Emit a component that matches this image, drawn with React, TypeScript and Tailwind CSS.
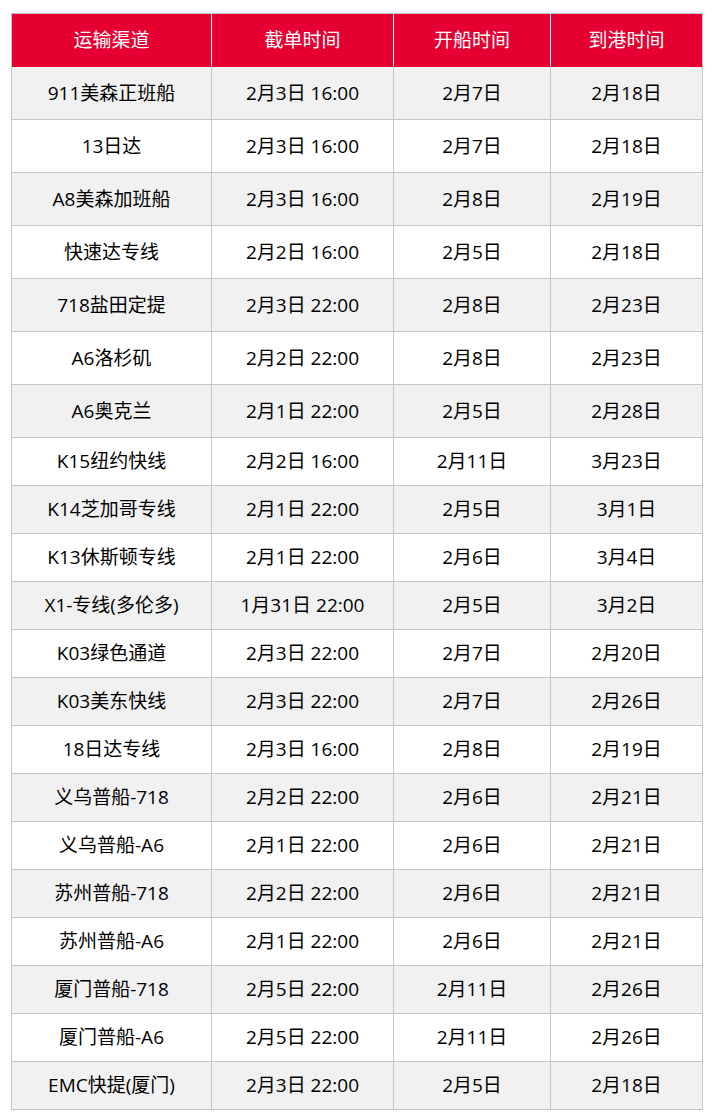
import React from "react";

type Row = [string, string, string, string];

const rows: Row[] = [
  ["911美森正班船", "2月3日 16:00", "2月7日", "2月18日"],
  ["13日达", "2月3日 16:00", "2月7日", "2月18日"],
  ["A8美森加班船", "2月3日 16:00", "2月8日", "2月19日"],
  ["快速达专线", "2月2日 16:00", "2月5日", "2月18日"],
  ["718盐田定提", "2月3日 22:00", "2月8日", "2月23日"],
  ["A6洛杉矶", "2月2日 22:00", "2月8日", "2月23日"],
  ["A6奥克兰", "2月1日 22:00", "2月5日", "2月28日"],
  ["K15纽约快线", "2月2日 16:00", "2月11日", "3月23日"],
  ["K14芝加哥专线", "2月1日 22:00", "2月5日", "3月1日"],
  ["K13休斯顿专线", "2月1日 22:00", "2月6日", "3月4日"],
  ["X1-专线(多伦多)", "1月31日 22:00", "2月5日", "3月2日"],
  ["K03绿色通道", "2月3日 22:00", "2月7日", "2月20日"],
  ["K03美东快线", "2月3日 22:00", "2月7日", "2月26日"],
  ["18日达专线", "2月3日 16:00", "2月8日", "2月19日"],
  ["义乌普船-718", "2月2日 22:00", "2月6日", "2月21日"],
  ["义乌普船-A6", "2月1日 22:00", "2月6日", "2月21日"],
  ["苏州普船-718", "2月2日 22:00", "2月6日", "2月21日"],
  ["苏州普船-A6", "2月1日 22:00", "2月6日", "2月21日"],
  ["厦门普船-718", "2月5日 22:00", "2月11日", "2月26日"],
  ["厦门普船-A6", "2月5日 22:00", "2月11日", "2月26日"],
  ["EMC快提(厦门)", "2月3日 22:00", "2月5日", "2月18日"],
];

const headers = ["运输渠道", "截单时间", "开船时间", "到港时间"];

export default function App() {
  return (
    <div
      className="min-h-[1119px] w-[713px] bg-white pl-[11px] pt-[13px]"
      style={{ fontFamily: '"Open Sans", "Noto Sans CJK SC", sans-serif' }}
    >
      <div className="grid w-[692px] grid-cols-[200px_182px_157px_152px] border-l border-t border-[#c6c6c6]">
        {/* Header */}
        {headers.map((h, i) => (
          <div
            key={h}
            className={`flex h-[53px] items-center justify-center border-b border-b-[#e60032] bg-[#e60032] text-[19px] text-white ${
              i === 3 ? "border-r border-r-[#c6c6c6]" : "border-r border-r-white"
            }`}
          >
            {h}
          </div>
        ))}

        {/* Body */}
        {rows.map((row, r) =>
          row.map((cell, c) => (
            <div
              key={`${r}-${c}`}
              className={`flex items-center justify-center border-b border-r border-[#c6c6c6] text-[19px] text-black ${
                r < 7 ? "h-[53px]" : "h-[48px]"
              } ${r % 2 === 0 ? "bg-[#f1f1f1]" : "bg-white"}`}
            >
              {cell}
            </div>
          ))
        )}
      </div>
    </div>
  );
}
